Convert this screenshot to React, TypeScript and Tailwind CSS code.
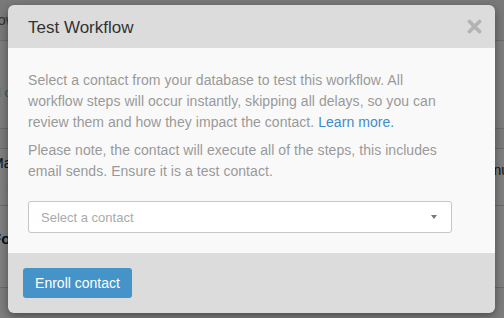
import { useState } from 'react';

export default function App() {
  const [contact, setContact] = useState('');

  return (
    <div className="relative w-[504px] h-[318px] overflow-hidden bg-white" style={{ fontFamily: '"Liberation Sans", Arial, sans-serif' }}>
      {/* Page behind the modal */}
      <div className="flex flex-col h-full">
        <div className="h-[41px] bg-[#f2f2f2] border-b border-[#d4d4d4] flex items-center pl-0 text-[15px] text-[#666] -ml-[10px]">
          flow
        </div>
        <div className="h-[88px] bg-[#fafafa] border-b border-[#d4d4d4] flex items-end pb-[26px] text-[13px] text-[#999] -ml-[2px]">
          l c
        </div>
        <div className="h-[19px] bg-[#f4f4f4]" />
        <div className="h-[58px] bg-white border-y border-[#d4d4d4] flex">
          <div className="flex flex-col text-[14px] leading-[21px] -ml-[8px] pt-[4px]">
            <span className="text-[#222]">Maujc</span>
            <span className="text-[#2a7fc0]">&nbsp;&nbsp;&nbsp;&nbsp;a</span>
          </div>
          <div className="flex-1" />
          <div className="pt-[11px] text-[#222] text-[14px] -mr-[12px]">nu l</div>
        </div>
        <div className="h-[82px] bg-[#fefefe] border-b border-[#d4d4d4] flex items-start pt-[22px] text-[15px] font-bold text-[#222] -ml-[8px]">
          For
        </div>
        <div className="flex-1 bg-[#fafafa]" />
      </div>

      {/* Overlay */}
      <div className="absolute inset-0 bg-black/50" />

      {/* Modal */}
      <div className="absolute left-[8px] top-[5px] w-[487px] rounded-[6px] overflow-hidden shadow-[0_3px_9px_rgba(0,0,0,0.4)] flex flex-col">
        <div className="h-[43px] bg-[#dcdcdc] flex items-center justify-between pl-[20px] pr-[13px]">
          <h3 className="text-[17px] text-[#333] leading-none pt-[1px]">Test Workflow</h3>
          <button className="w-[15px] h-[15px] flex items-center justify-center">
            <svg width="15" height="15" viewBox="0 0 15 15">
              <path d="M2.5 2.5 L12.5 12.5 M12.5 2.5 L2.5 12.5" stroke="#b3b3b3" strokeWidth="3.8" strokeLinecap="round" />
            </svg>
          </button>
        </div>

        <div className="bg-[#f9f9f9] pl-[20px] pr-[43px] pt-[22px] pb-[20px] text-[14px] leading-[21px] text-[#999] tracking-[0.05px]">
          <p>
            Select a contact from your database to test this workflow. All workflow steps will occur instantly, skipping all delays, so you can review them and how they impact the contact.{' '}
            <a className="text-[#428bca]">Learn more.</a>
          </p>
          <p className="mt-[7px]">
            Please note, the contact will execute all of the steps, this includes email sends. Ensure it is a test contact.
          </p>
          <div className="relative mt-[19px] w-[424px] h-[32px] bg-white border border-[#c6c6c6] rounded-[3px] flex items-center pl-[12px] pr-[14px]">
            <select
              value={contact}
              onChange={(e) => setContact(e.target.value)}
              className="absolute inset-0 opacity-0 cursor-pointer"
            >
              <option value="">Select a contact</option>
            </select>
            <span className="flex-1 text-[13px] text-[#aaa] tracking-normal">Select a contact</span>
            <svg width="6" height="4" viewBox="0 0 6 4">
              <path d="M0 0 H6 L3 4 Z" fill="#777" />
            </svg>
          </div>
        </div>

        <div className="h-[60px] bg-[#dcdcdc] px-[15px] flex items-center">
          <button className="h-[30px] w-[109px] rounded-[3px] bg-[#4594c9] text-white text-[14px]">
            Enroll contact
          </button>
        </div>
      </div>
    </div>
  );
}
